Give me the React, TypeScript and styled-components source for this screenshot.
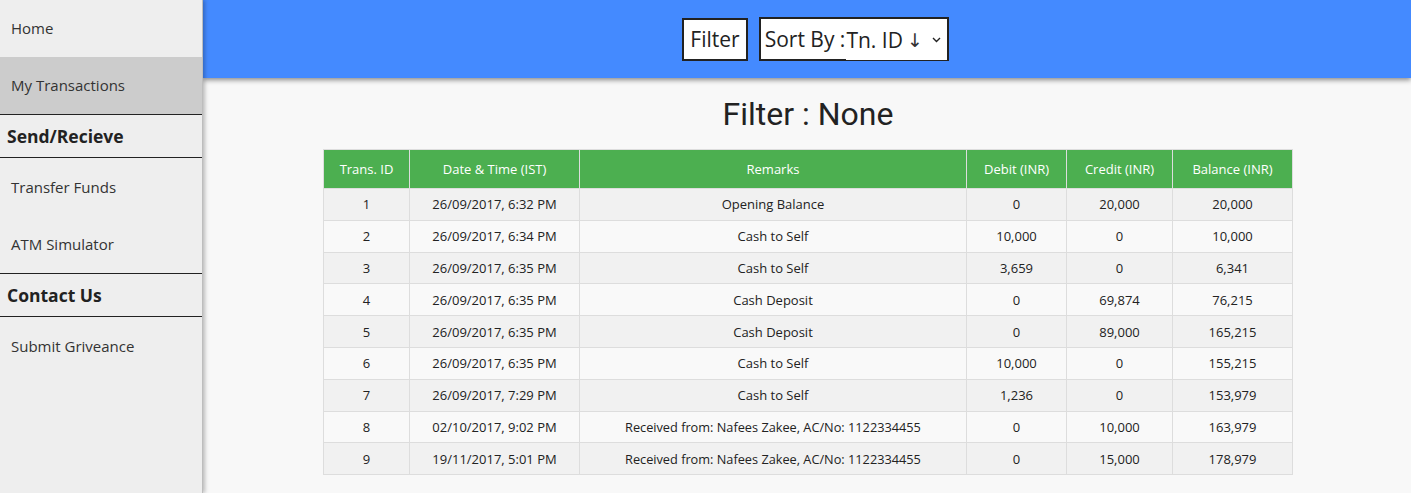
import React from "react";
import styled, { createGlobalStyle } from "styled-components";

const Global = createGlobalStyle`
  html, body { margin: 0; padding: 0; }
  body {
    font-family: "Open Sans", "Liberation Sans", sans-serif;
    background: #f8f8f8;
    color: #333;
    overflow: hidden;
  }
`;

const Page = styled.div`
  display: grid;
  grid-template-columns: 203px 1fr;
  height: 493px;
  width: 1411px;
`;

const Sidebar = styled.nav`
  background: #eeeeee;
  border-right: 1px solid #bdbdbd;
  box-shadow: 2px 0 4px rgba(0, 0, 0, 0.25);
  position: relative;
  z-index: 2;
  display: flex;
  flex-direction: column;
`;

const NavItem = styled.div<{ $active?: boolean; $h?: number }>`
  height: ${(p) => p.$h ?? 57}px;
  display: flex;
  align-items: center;
  padding-left: 11px;
  padding-bottom: 1px;
  box-sizing: border-box;
  font-size: 15px;
  color: #333;
  background: ${(p) => (p.$active ? "#cccccc" : "transparent")};
`;

const NavHeading = styled.div`
  height: 42px;
  display: flex;
  align-items: center;
  padding-left: 7px;
  font-size: 17.5px;
  font-weight: 700;
  color: #222;
  border-top: 1px solid #222;
  border-bottom: 1px solid #222;
`;

const Main = styled.main`
  display: flex;
  flex-direction: column;
  align-items: center;
  min-width: 0;
`;

const TopBar = styled.header`
  align-self: stretch;
  height: 78px;
  background: #448aff;
  box-shadow: 0 2px 5px rgba(0, 0, 0, 0.45);
  display: flex;
  align-items: center;
  justify-content: center;
  gap: 11px;
  padding-left: 17px;
  position: relative;
  z-index: 1;
`;

const FilterButton = styled.div`
  height: 39px;
  padding: 0 6px;
  background: #fff;
  border: 2px solid #222;
  display: flex;
  align-items: center;
  font-size: 21px;
  color: #222;
`;

const SortBox = styled.div`
  box-sizing: border-box;
  height: 44px;
  width: 190px;
  background: #fff;
  border: 2px solid #222;
  display: flex;
  align-items: center;
  padding-left: 4px;
  font-size: 21px;
  color: #222;
  position: relative;
`;

const SortSelect = styled.div`
  flex: 1;
  align-self: stretch;
  display: flex;
  align-items: center;
  margin-left: 1px;
  margin-bottom: -1px;
  background: #fff;
  font-size: 21px;
  color: #222;
`;

const Arrow = styled.span`
  font-family: "DejaVu Sans", sans-serif;
  font-size: 19px;
  color: #333;
  margin-left: 4px;
`;

const Chevron = styled.svg`
  margin-left: auto;
  margin-right: 6px;
  width: 9px;
  height: 6px;
`;

const Title = styled.h1`
  margin: 18px 0 17px 2px;
  font-family: Roboto, "Open Sans", sans-serif;
  font-weight: 400;
  font-size: 32px;
  line-height: 36px;
  color: #222;
`;

const Table = styled.table`
  width: 969px;
  margin-left: 2px;
  table-layout: fixed;
  border-collapse: collapse;
  font-size: 13px;
  color: #222;
  text-align: center;
`;

const Col = styled.col<{ $w: number }>`
  width: ${(p) => p.$w}px;
`;

const Th = styled.th`
  height: 38px;
  background: #4caf50;
  color: #fff;
  font-weight: 400;
  border: 1px solid #ddd;
  padding: 0;
`;

const Tr = styled.tr<{ $odd: boolean }>`
  background: ${(p) => (p.$odd ? "#f1f1f1" : "#f9f9f9")};
`;

const Td = styled.td`
  height: 30.8px;
  border: 1px solid #ddd;
  padding: 0;
`;

const Narrow = styled.span`
  display: inline-block;
  transform: scaleX(0.98);
  white-space: nowrap;
`;

const columns: [string, number][] = [
  ["Trans. ID", 86],
  ["Date & Time (IST)", 170],
  ["Remarks", 387],
  ["Debit (INR)", 100],
  ["Credit (INR)", 106],
  ["Balance (INR)", 120],
];

const rows = [
  ["1", "26/09/2017, 6:32 PM", "Opening Balance", "0", "20,000", "20,000"],
  ["2", "26/09/2017, 6:34 PM", "Cash to Self", "10,000", "0", "10,000"],
  ["3", "26/09/2017, 6:35 PM", "Cash to Self", "3,659", "0", "6,341"],
  ["4", "26/09/2017, 6:35 PM", "Cash Deposit", "0", "69,874", "76,215"],
  ["5", "26/09/2017, 6:35 PM", "Cash Deposit", "0", "89,000", "165,215"],
  ["6", "26/09/2017, 6:35 PM", "Cash to Self", "10,000", "0", "155,215"],
  ["7", "26/09/2017, 7:29 PM", "Cash to Self", "1,236", "0", "153,979"],
  ["8", "02/10/2017, 9:02 PM", "Received from: Nafees Zakee, AC/No: 1122334455", "0", "10,000", "163,979"],
  ["9", "19/11/2017, 5:01 PM", "Received from: Nafees Zakee, AC/No: 1122334455", "0", "15,000", "178,979"],
];

export default function App() {
  return (
    <Page>
      <Global />
      <Sidebar>
        <NavItem>Home</NavItem>
        <NavItem $active>My Transactions</NavItem>
        <NavHeading>Send/Recieve</NavHeading>
        <NavItem $h={58}>Transfer Funds</NavItem>
        <NavItem>ATM Simulator</NavItem>
        <NavHeading>Contact Us</NavHeading>
        <NavItem $h={58}>Submit Griveance</NavItem>
      </Sidebar>
      <Main>
        <TopBar>
          <FilterButton>Filter</FilterButton>
          <SortBox>
            Sort By :
            <SortSelect>
              Tn. ID<Arrow>↓</Arrow>
              <Chevron viewBox="0 0 9 6">
                <path d="M1 1 L4.5 4.5 L8 1" fill="none" stroke="#222" strokeWidth="1.4" />
              </Chevron>
            </SortSelect>
          </SortBox>
        </TopBar>
        <Title>Filter : None</Title>
        <Table>
          <colgroup>
            {columns.map(([c, w]) => (
              <Col key={c} $w={w} />
            ))}
          </colgroup>
          <thead>
            <tr>
              {columns.map(([c]) => (
                <Th key={c}>{c}</Th>
              ))}
            </tr>
          </thead>
          <tbody>
            {rows.map((r, i) => (
              <Tr key={r[0]} $odd={i % 2 === 0}>
                {r.map((cell, j) => (
                  <Td key={j}>
                    {j === 2 && cell.length > 30 ? <Narrow>{cell}</Narrow> : cell}
                  </Td>
                ))}
              </Tr>
            ))}
          </tbody>
        </Table>
      </Main>
    </Page>
  );
}
